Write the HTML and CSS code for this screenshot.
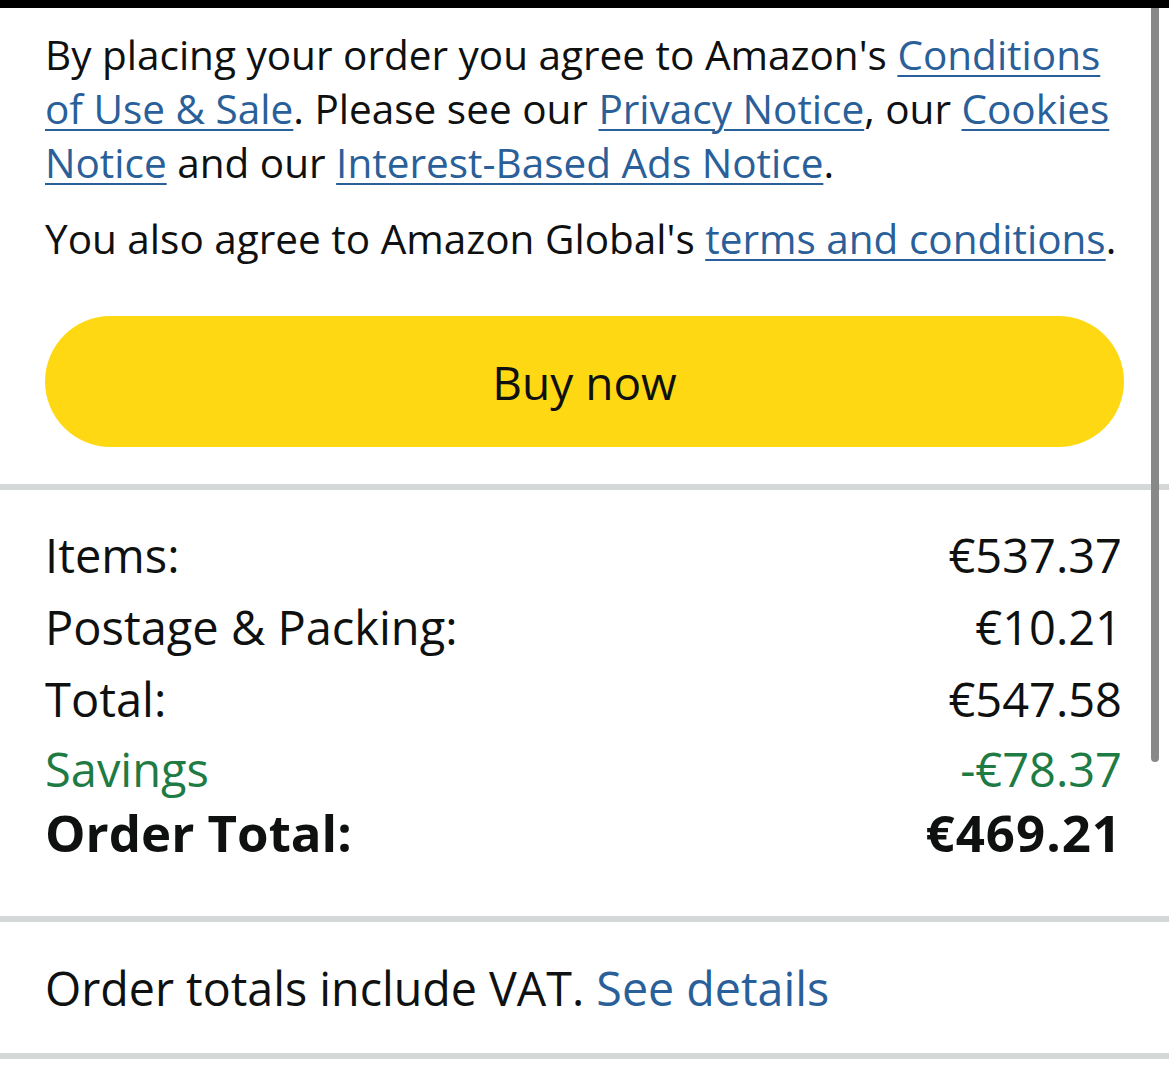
FILE: index.html
```html
<!DOCTYPE html>
<html lang="en">
<head>
  <meta charset="UTF-8">
  <meta name="viewport" content="width=device-width, initial-scale=1.0">
  <title>Place your order</title>
  <link rel="stylesheet" href="styles.css">
</head>
<body>
  <div class="topbar"></div>

  <div class="section legal">
    <p class="legal-text">By placing your order you agree to Amazon's <a href="#">Conditions of Use &amp; Sale</a>. Please see our <a href="#">Privacy Notice</a>, our <a href="#">Cookies Notice</a> and our <a href="#">Interest-Based Ads Notice</a>.</p>
    <p class="legal-text second">You also agree to Amazon Global's <a href="#">terms and conditions</a>.</p>
    <button class="buy-btn">Buy now</button>
  </div>

  <div class="divider"></div>

  <div class="section totals">
    <div class="row"><span>Items:</span><span>€537.37</span></div>
    <div class="row"><span>Postage &amp; Packing:</span><span>€10.21</span></div>
    <div class="row"><span>Total:</span><span>€547.58</span></div>
    <div class="row savings"><span>Savings</span><span>-€78.37</span></div>
    <div class="row grand"><span>Order Total:</span><span>€469.21</span></div>
  </div>

  <div class="divider"></div>

  <div class="section vat">
    <p>Order totals include VAT. <a href="#" class="plain">See details</a></p>
  </div>

  <div class="divider"></div>

  <div class="scrollbar"></div>
</body>
</html>
```

FILE: styles.css
```css
body {
  margin: 0;
  background: #fff;
  color: #0f1111;
  font-family: "Open Sans", "Noto Sans", sans-serif;
  position: relative;
  height: 1074px;
  overflow: hidden;
}

.topbar {
  height: 8px;
  background: #000;
}

.section {
  padding: 0 45px;
}

a {
  color: #2a6099;
  text-decoration: underline;
  text-decoration-thickness: 2px;
  text-underline-offset: 5px;
}

a.plain {
  text-decoration: none;
}

.legal {
  padding-top: 20px;
  padding-bottom: 37px;
}

.legal-text {
  margin: 0;
  font-size: 40.5px;
  line-height: 54px;
}

.legal-text.second {
  margin-top: 22px;
}

.buy-btn {
  display: block;
  width: 100%;
  height: 131px;
  margin-top: 50px;
  border: none;
  border-radius: 66px;
  background: #ffd814;
  color: #0f1111;
  font-family: inherit;
  font-size: 46px;
}

.divider {
  height: 6px;
  background: #d5d8d9;
}

.totals {
  padding-top: 29px;
  padding-bottom: 55px;
  padding-right: 47px;
}

.row {
  display: flex;
  justify-content: space-between;
  font-size: 47px;
  line-height: 72px;
}

.row.savings {
  color: #1e7b44;
  line-height: 68px;
}

.row.grand {
  font-weight: bold;
  font-size: 51px;
  line-height: 58px;
}

.row.grand span:last-child {
  letter-spacing: 1px;
}

.vat {
  padding-top: 36px;
  padding-bottom: 35px;
}

.vat p {
  margin: 0;
  font-size: 46.6px;
  line-height: 60px;
}

.scrollbar {
  position: absolute;
  top: 8px;
  left: 1151px;
  width: 8px;
  height: 754px;
  border-radius: 0 0 4px 4px;
  background: #888;
}
```
